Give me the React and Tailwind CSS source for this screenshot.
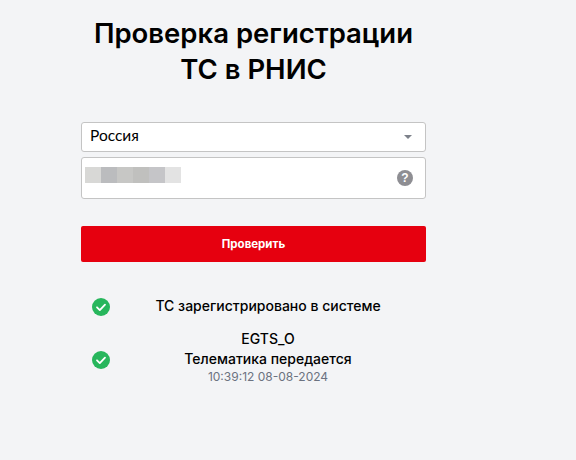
const mosaic = ['#d8d8d6', '#bbbcbe', '#c7c7c5', '#c0c0be', '#c5c5c8', '#e3e3e3']

function CheckBadge({ className = '' }) {
  return (
    <svg width="18" height="18" viewBox="0 0 18 18" className={`shrink-0 ${className}`}>
      <circle cx="9" cy="9" r="9" fill="#27b65c" />
      <path d="M5 9.3l2.8 2.8L13 6.6" fill="none" stroke="#fff" strokeWidth="1.8" strokeLinecap="round" strokeLinejoin="round" />
    </svg>
  )
}

export default function App() {
  return (
    <div className="min-h-[460px] bg-[#f3f4f6] font-['Inter',sans-serif] text-black overflow-hidden">
      <div className="w-[345px] ml-[81px] pt-[15px]">
        <h1 className="text-[27.5px] leading-[36px] font-semibold text-center h-[72px] whitespace-nowrap">
          Проверка регистрации<br />ТС в РНИС
        </h1>

        <div className="mt-[35px] h-[30px] bg-white border border-[#c4c4c4] rounded-[3px] flex items-center justify-between pl-[8px] pr-[13px] font-['Lato',sans-serif] text-[15.5px]">
          <span className="-mt-[2px]">Россия</span>
          <span className="w-0 h-0 border-x-[4px] border-x-transparent border-t-[4px] border-t-[#7d818a]" />
        </div>

        <div className="mt-[5px] h-[42px] bg-white border border-[#c4c4c4] rounded-[3px] flex justify-between pl-[3px] pr-[12px]">
          <div className="flex mt-[9px] h-[16px]">
            {mosaic.map(c => (
              <div key={c} className="w-[16px] h-[16px]" style={{ backgroundColor: c }} />
            ))}
          </div>
          <div className="self-center w-[16px] h-[16px] rounded-full bg-[#8e8e93] text-white text-[12px] leading-[16px] font-bold text-center font-['Liberation_Sans',sans-serif]">
            ?
          </div>
        </div>

        <button className="mt-[27px] w-full h-[36px] bg-[#e6000f] rounded-[2px] text-white text-[11.5px] font-bold pt-[2px]">
          Проверить
        </button>

        <div className="mt-[36px] pl-[11px] flex items-center h-[18px]">
          <CheckBadge />
          <p className="flex-1 text-center text-[14px] font-medium -mt-[4px] whitespace-nowrap">ТС зарегистрировано в системе</p>
        </div>

        <div className="mt-[15px] pl-[11px] flex items-center">
          <CheckBadge className="mt-[4px]" />
          <div className="flex-1 text-center font-medium -mt-[2px]">
            <p className="text-[14px] leading-[20px]">EGTS_O</p>
            <p className="text-[14px] leading-[20px] whitespace-nowrap">Телематика передается</p>
            <p className="text-[12px] leading-[16px] font-normal text-[#6b7280]">10:39:12 08-08-2024</p>
          </div>
        </div>
      </div>
    </div>
  )
}
